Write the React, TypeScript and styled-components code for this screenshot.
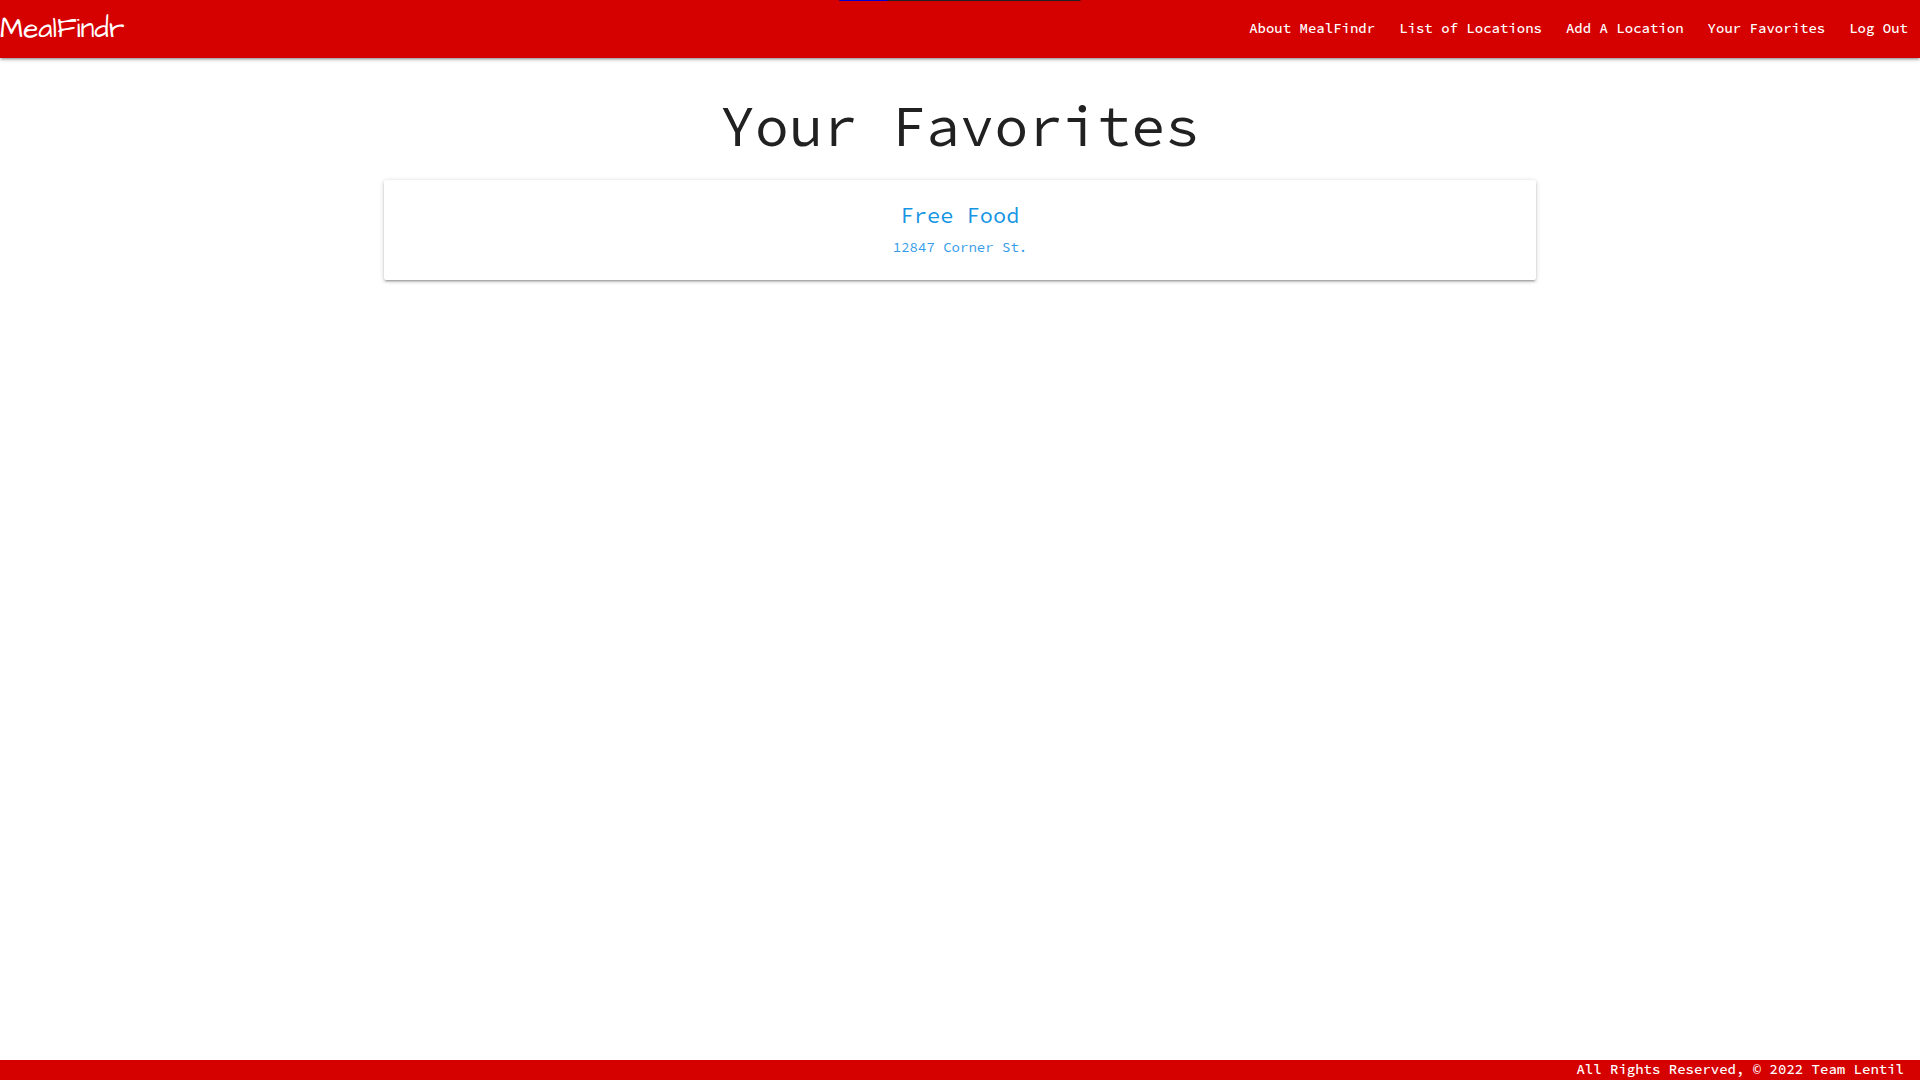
import React from "react";
import styled, { createGlobalStyle } from "styled-components";

const GlobalStyle = createGlobalStyle`
  *, *::before, *::after { box-sizing: border-box; }
  body {
    margin: 0;
    background: #fff;
    color: #212121;
    font-family: "Source Code Pro", "DejaVu Sans Mono", monospace;
    font-size: 14px;
  }
`;

const shadow = `0 2px 2px 0 rgba(0, 0, 0, 0.14), 0 3px 1px -2px rgba(0, 0, 0, 0.12),
    0 1px 5px 0 rgba(0, 0, 0, 0.2)`;

const Page = styled.div`
  display: flex;
  flex-direction: column;
  min-height: 100vh;
`;

const Progress = styled.div`
  position: absolute;
  top: 0;
  left: 50%;
  display: flex;
  width: 241px;
  height: 1px;
  transform: translateX(-50%);
  background: #212121;
`;

const ProgressFill = styled.div`
  width: 20%;
  background: #0000d6;
`;

const Header = styled.header`
  display: flex;
  align-items: flex-start;
  justify-content: space-between;
  height: 58px;
  background: #d50000;
  box-shadow: ${shadow};
`;

const Logo = styled.a`
  color: #fff;
  font-family: "Architects Daughter", Lato, cursive;
  font-size: 28px;
  line-height: 58px;
  text-decoration: none;
`;

const NavList = styled.ul`
  display: flex;
  margin: 0;
  padding: 0;
  list-style: none;
`;

const NavLink = styled.a`
  display: block;
  padding: 0 12px;
  color: #fff;
  font-weight: 500;
  line-height: 56px;
  text-decoration: none;
`;

const Main = styled.main`
  flex: 1;
  width: 60%;
  margin: 0 auto;
  text-align: center;
`;

const Title = styled.h1`
  margin: 37px 0 23px;
  font-size: 57px;
  font-weight: 400;
  line-height: 62px;
`;

const Card = styled.a`
  display: block;
  padding: 20px;
  border-radius: 2px;
  background: #fff;
  box-shadow: ${shadow};
  color: #1595e3;
  text-decoration: none;
`;

const PlaceName = styled.h2`
  margin: 0;
  font-size: 22px;
  font-weight: 400;
  line-height: 30px;
`;

const Address = styled.p`
  margin: 6px 0 2px;
  color: #359cea;
  line-height: 22px;
`;

const Footer = styled.footer`
  padding: 0 16px 2px;
  background: #d50000;
  color: #fff;
  font-weight: 500;
  line-height: 18px;
  text-align: right;
`;

const links = [
  "About MealFindr",
  "List of Locations",
  "Add A Location",
  "Your Favorites",
  "Log Out",
];

const favorites = [{ name: "Free Food", address: "12847 Corner St." }];

export default function App() {
  return (
    <Page>
      <GlobalStyle />
      <Header>
        <Logo href="#">MealFindr</Logo>
        <nav>
          <NavList>
            {links.map((label) => (
              <li key={label}>
                <NavLink href="#">{label}</NavLink>
              </li>
            ))}
          </NavList>
        </nav>
      </Header>
      <Progress>
        <ProgressFill />
      </Progress>
      <Main>
        <Title>Your Favorites</Title>
        {favorites.map((place) => (
          <Card href="#" key={place.name}>
            <PlaceName>{place.name}</PlaceName>
            <Address>{place.address}</Address>
          </Card>
        ))}
      </Main>
      <Footer>All Rights Reserved, © 2022 Team Lentil</Footer>
    </Page>
  );
}
